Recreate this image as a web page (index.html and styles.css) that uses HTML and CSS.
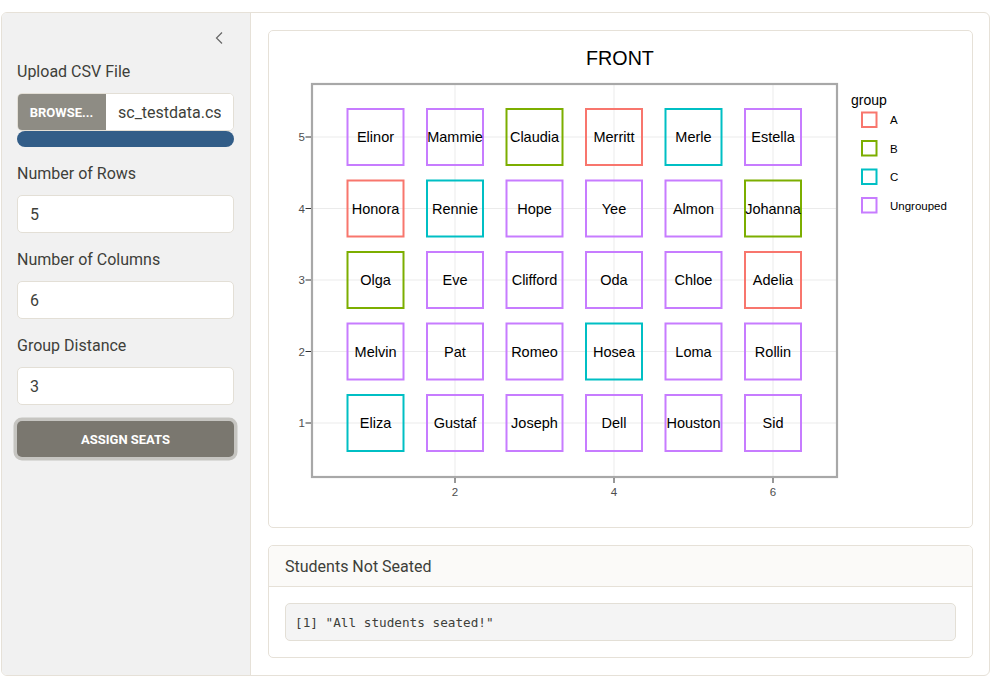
FILE: index.html
```html
<!DOCTYPE html>
<html lang="en">
<head>
<meta charset="utf-8">
<title>Seating Chart</title>
<link rel="stylesheet" href="styles.css">
</head>
<body>
<div class="layout">
  <aside class="sidebar">
    <button class="collapse-toggle" aria-label="Collapse sidebar">
      <svg width="8" height="12" viewBox="0 0 8 12"><polyline points="7,0.5 1.5,6 7,11.5" fill="none" stroke="#666" stroke-width="1.2"/></svg>
    </button>
    <div class="field">
      <label class="field-label">Upload CSV File</label>
      <div class="file-group">
        <span class="browse-btn">BROWSE...</span>
        <input class="file-name" type="text" readonly value="sc_testdata.csv">
      </div>
      <div class="progress"></div>
    </div>
    <div class="field">
      <label class="field-label">Number of Rows</label>
      <input class="form-control" type="text" value="5">
    </div>
    <div class="field">
      <label class="field-label">Number of Columns</label>
      <input class="form-control" type="text" value="6">
    </div>
    <div class="field">
      <label class="field-label">Group Distance</label>
      <input class="form-control" type="text" value="3">
    </div>
    <button class="assign-btn">ASSIGN SEATS</button>
  </aside>
  <main class="main">
    <section class="card plot-card">
      <svg class="plot" width="670" height="464" viewBox="285 47 670 464" font-family="'Liberation Sans', Arial, sans-serif">
        <text x="620" y="65" font-size="19.7" text-anchor="middle" fill="#000">FRONT</text>
        <rect x="312" y="84" width="525" height="393" fill="#fff"/>
        <g stroke="#ebebeb" stroke-width="1">
          <line x1="455" y1="84" x2="455" y2="477"/>
          <line x1="614" y1="84" x2="614" y2="477"/>
          <line x1="773" y1="84" x2="773" y2="477"/>
          <line x1="312" y1="137" x2="837" y2="137"/>
          <line x1="312" y1="208.5" x2="837" y2="208.5"/>
          <line x1="312" y1="280" x2="837" y2="280"/>
          <line x1="312" y1="351.5" x2="837" y2="351.5"/>
          <line x1="312" y1="423" x2="837" y2="423"/>
        </g>
        <rect x="312" y="84" width="525" height="393" fill="none" stroke="#a8a8a8" stroke-width="2.2"/>
        <g stroke="#333" stroke-width="1">
          <line x1="305.5" y1="137" x2="311" y2="137"/>
          <line x1="305.5" y1="208.5" x2="311" y2="208.5"/>
          <line x1="305.5" y1="280" x2="311" y2="280"/>
          <line x1="305.5" y1="351.5" x2="311" y2="351.5"/>
          <line x1="305.5" y1="423" x2="311" y2="423"/>
          <line x1="455" y1="478" x2="455" y2="483"/>
          <line x1="614" y1="478" x2="614" y2="483"/>
          <line x1="773" y1="478" x2="773" y2="483"/>
        </g>
        <g font-size="11.5" fill="#4d4d4d" text-anchor="end">
          <text x="305" y="141">5</text>
          <text x="305" y="212.5">4</text>
          <text x="305" y="284">3</text>
          <text x="305" y="355.5">2</text>
          <text x="305" y="427">1</text>
        </g>
        <g font-size="11.5" fill="#4d4d4d" text-anchor="middle">
          <text x="455" y="496">2</text>
          <text x="614" y="496">4</text>
          <text x="773" y="496">6</text>
        </g>
        <text x="851" y="105" font-size="14" fill="#000">group</text>
        <g stroke-width="2" fill="#fff">
          <rect x="862" y="112.5" width="14.5" height="14.5" stroke="#F8766D"/>
          <rect x="862" y="141" width="14.5" height="14.5" stroke="#7CAE00"/>
          <rect x="862" y="169.5" width="14.5" height="14.5" stroke="#00BFC4"/>
          <rect x="862" y="198" width="14.5" height="14.5" stroke="#C77CFF"/>
        </g>
        <g font-size="11.5" fill="#000">
          <text x="890" y="124">A</text>
          <text x="890" y="152.5">B</text>
          <text x="890" y="181">C</text>
          <text x="890" y="209.5">Ungrouped</text>
        </g>
        <g font-size="14.5" text-anchor="middle" fill="#000" stroke-width="2">
          <rect x="347.5" y="109" width="56" height="56" fill="none" stroke="#C77CFF"/><text x="375.5" y="142">Elinor</text>
          <rect x="427" y="109" width="56" height="56" fill="none" stroke="#C77CFF"/><text x="455" y="142">Mammie</text>
          <rect x="506.5" y="109" width="56" height="56" fill="none" stroke="#7CAE00"/><text x="534.5" y="142">Claudia</text>
          <rect x="586" y="109" width="56" height="56" fill="none" stroke="#F8766D"/><text x="614" y="142">Merritt</text>
          <rect x="665.5" y="109" width="56" height="56" fill="none" stroke="#00BFC4"/><text x="693.5" y="142">Merle</text>
          <rect x="745" y="109" width="56" height="56" fill="none" stroke="#C77CFF"/><text x="773" y="142">Estella</text>

          <rect x="347.5" y="180.5" width="56" height="56" fill="none" stroke="#F8766D"/><text x="375.5" y="213.5">Honora</text>
          <rect x="427" y="180.5" width="56" height="56" fill="none" stroke="#00BFC4"/><text x="455" y="213.5">Rennie</text>
          <rect x="506.5" y="180.5" width="56" height="56" fill="none" stroke="#C77CFF"/><text x="534.5" y="213.5">Hope</text>
          <rect x="586" y="180.5" width="56" height="56" fill="none" stroke="#C77CFF"/><text x="614" y="213.5">Yee</text>
          <rect x="665.5" y="180.5" width="56" height="56" fill="none" stroke="#C77CFF"/><text x="693.5" y="213.5">Almon</text>
          <rect x="745" y="180.5" width="56" height="56" fill="none" stroke="#7CAE00"/><text x="773" y="213.5">Johanna</text>

          <rect x="347.5" y="252" width="56" height="56" fill="none" stroke="#7CAE00"/><text x="375.5" y="285">Olga</text>
          <rect x="427" y="252" width="56" height="56" fill="none" stroke="#C77CFF"/><text x="455" y="285">Eve</text>
          <rect x="506.5" y="252" width="56" height="56" fill="none" stroke="#C77CFF"/><text x="534.5" y="285">Clifford</text>
          <rect x="586" y="252" width="56" height="56" fill="none" stroke="#C77CFF"/><text x="614" y="285">Oda</text>
          <rect x="665.5" y="252" width="56" height="56" fill="none" stroke="#C77CFF"/><text x="693.5" y="285">Chloe</text>
          <rect x="745" y="252" width="56" height="56" fill="none" stroke="#F8766D"/><text x="773" y="285">Adelia</text>

          <rect x="347.5" y="323.5" width="56" height="56" fill="none" stroke="#C77CFF"/><text x="375.5" y="356.5">Melvin</text>
          <rect x="427" y="323.5" width="56" height="56" fill="none" stroke="#C77CFF"/><text x="455" y="356.5">Pat</text>
          <rect x="506.5" y="323.5" width="56" height="56" fill="none" stroke="#C77CFF"/><text x="534.5" y="356.5">Romeo</text>
          <rect x="586" y="323.5" width="56" height="56" fill="none" stroke="#00BFC4"/><text x="614" y="356.5">Hosea</text>
          <rect x="665.5" y="323.5" width="56" height="56" fill="none" stroke="#C77CFF"/><text x="693.5" y="356.5">Loma</text>
          <rect x="745" y="323.5" width="56" height="56" fill="none" stroke="#C77CFF"/><text x="773" y="356.5">Rollin</text>

          <rect x="347.5" y="395" width="56" height="56" fill="none" stroke="#00BFC4"/><text x="375.5" y="428">Eliza</text>
          <rect x="427" y="395" width="56" height="56" fill="none" stroke="#C77CFF"/><text x="455" y="428">Gustaf</text>
          <rect x="506.5" y="395" width="56" height="56" fill="none" stroke="#C77CFF"/><text x="534.5" y="428">Joseph</text>
          <rect x="586" y="395" width="56" height="56" fill="none" stroke="#C77CFF"/><text x="614" y="428">Dell</text>
          <rect x="665.5" y="395" width="56" height="56" fill="none" stroke="#C77CFF"/><text x="693.5" y="428">Houston</text>
          <rect x="745" y="395" width="56" height="56" fill="none" stroke="#C77CFF"/><text x="773" y="428">Sid</text>
        </g>
      </svg>
    </section>
    <section class="card output-card">
      <header class="card-header">Students Not Seated</header>
      <div class="card-body">
        <pre class="output">[1] "All students seated!"</pre>
      </div>
    </section>
  </main>
</div>
</body>
</html>
```
FILE: styles.css
```css
* { box-sizing: border-box; }

html, body {
  margin: 0;
  padding: 0;
  background: #fff;
}

body {
  font-family: Roboto, "Liberation Sans", Arial, sans-serif;
  color: #3e3f3a;
  width: 992px;
  height: 686px;
  overflow: hidden;
}

.layout {
  display: flex;
  margin: 12px 2px 10px 1px;
  height: 664px;
  border: 1px solid #e6e1d8;
  border-radius: 6px;
  overflow: hidden;
}

.sidebar {
  position: relative;
  width: 249px;
  flex: none;
  background: #f1f1f1;
  border-right: 1px solid #e6e1d8;
  padding: 47px 16px 16px 15px;
  display: flex;
  flex-direction: column;
  gap: 15px;
}

.collapse-toggle {
  position: absolute;
  top: 17px;
  left: 209px;
  width: 16px;
  height: 16px;
  padding: 0;
  border: 0;
  background: transparent;
  display: flex;
  align-items: center;
  justify-content: center;
}

.field {
  display: flex;
  flex-direction: column;
}

.field-label {
  font-size: 16px;
  line-height: 24px;
  margin-bottom: 9px;
  color: #3e3f3a;
}

.file-group {
  display: flex;
  height: 38px;
  border-radius: 5px;
  overflow: hidden;
  background: #fff;
  border: 1px solid #e3dfd6;
}

.browse-btn {
  width: 89px;
  flex: none;
  background: #8e8c84;
  color: #fff;
  font-weight: 700;
  font-size: 13px;
  display: flex;
  align-items: center;
  justify-content: center;
  margin: -1px 0 -1px -1px;
}

.file-name {
  flex: 1;
  min-width: 0;
  border: 0;
  outline: none;
  background: #fff;
  font-family: Roboto, "Liberation Sans", Arial, sans-serif;
  font-size: 16px;
  padding: 0 12px;
  color: #3e3f3a;
}

.progress {
  height: 16px;
  background: #325d88;
  border-radius: 8px;
}

.form-control {
  height: 38px;
  width: 100%;
  border: 1px solid #e3dfd6;
  border-radius: 5px;
  background: #fff;
  padding: 6px 12px;
  font-family: Roboto, "Liberation Sans", Arial, sans-serif;
  font-size: 16px;
  color: #3e3f3a;
  outline: none;
}

.assign-btn {
  height: 36px;
  margin-top: 1px;
  border: 0;
  border-radius: 5px;
  background: #7a776f;
  color: #fff;
  font-family: Roboto, "Liberation Sans", Arial, sans-serif;
  font-weight: 700;
  font-size: 13px;
  box-shadow: 0 0 0 3.5px #c6c5c1;
}

.main {
  flex: 1;
  padding: 17px 16px 16px 17px;
  display: flex;
  flex-direction: column;
  gap: 17px;
}

.card {
  border: 1px solid #e6e1d8;
  border-radius: 5px;
  background: #fff;
}

.plot-card {
  height: 498px;
  padding: 16px;
}

.plot {
  display: block;
}

.output-card {
  height: 113px;
  display: flex;
  flex-direction: column;
}

.card-header {
  height: 41px;
  padding: 0 16px;
  display: flex;
  align-items: center;
  font-size: 16px;
  background: #fbfaf8;
  border-bottom: 1px solid #e6e1d8;
  border-radius: 5px 5px 0 0;
  color: #3e3f3a;
}

.card-body {
  padding: 16px 16px 16px 16px;
}

.output {
  margin: 0;
  height: 38px;
  padding: 0 9px;
  display: flex;
  align-items: center;
  background: #f4f4f4;
  border: 1px solid #e3dfd6;
  border-radius: 5px;
  font-family: "DejaVu Sans Mono", "Liberation Mono", monospace;
  font-size: 12.7px;
  color: #3e3f3a;
}
```
